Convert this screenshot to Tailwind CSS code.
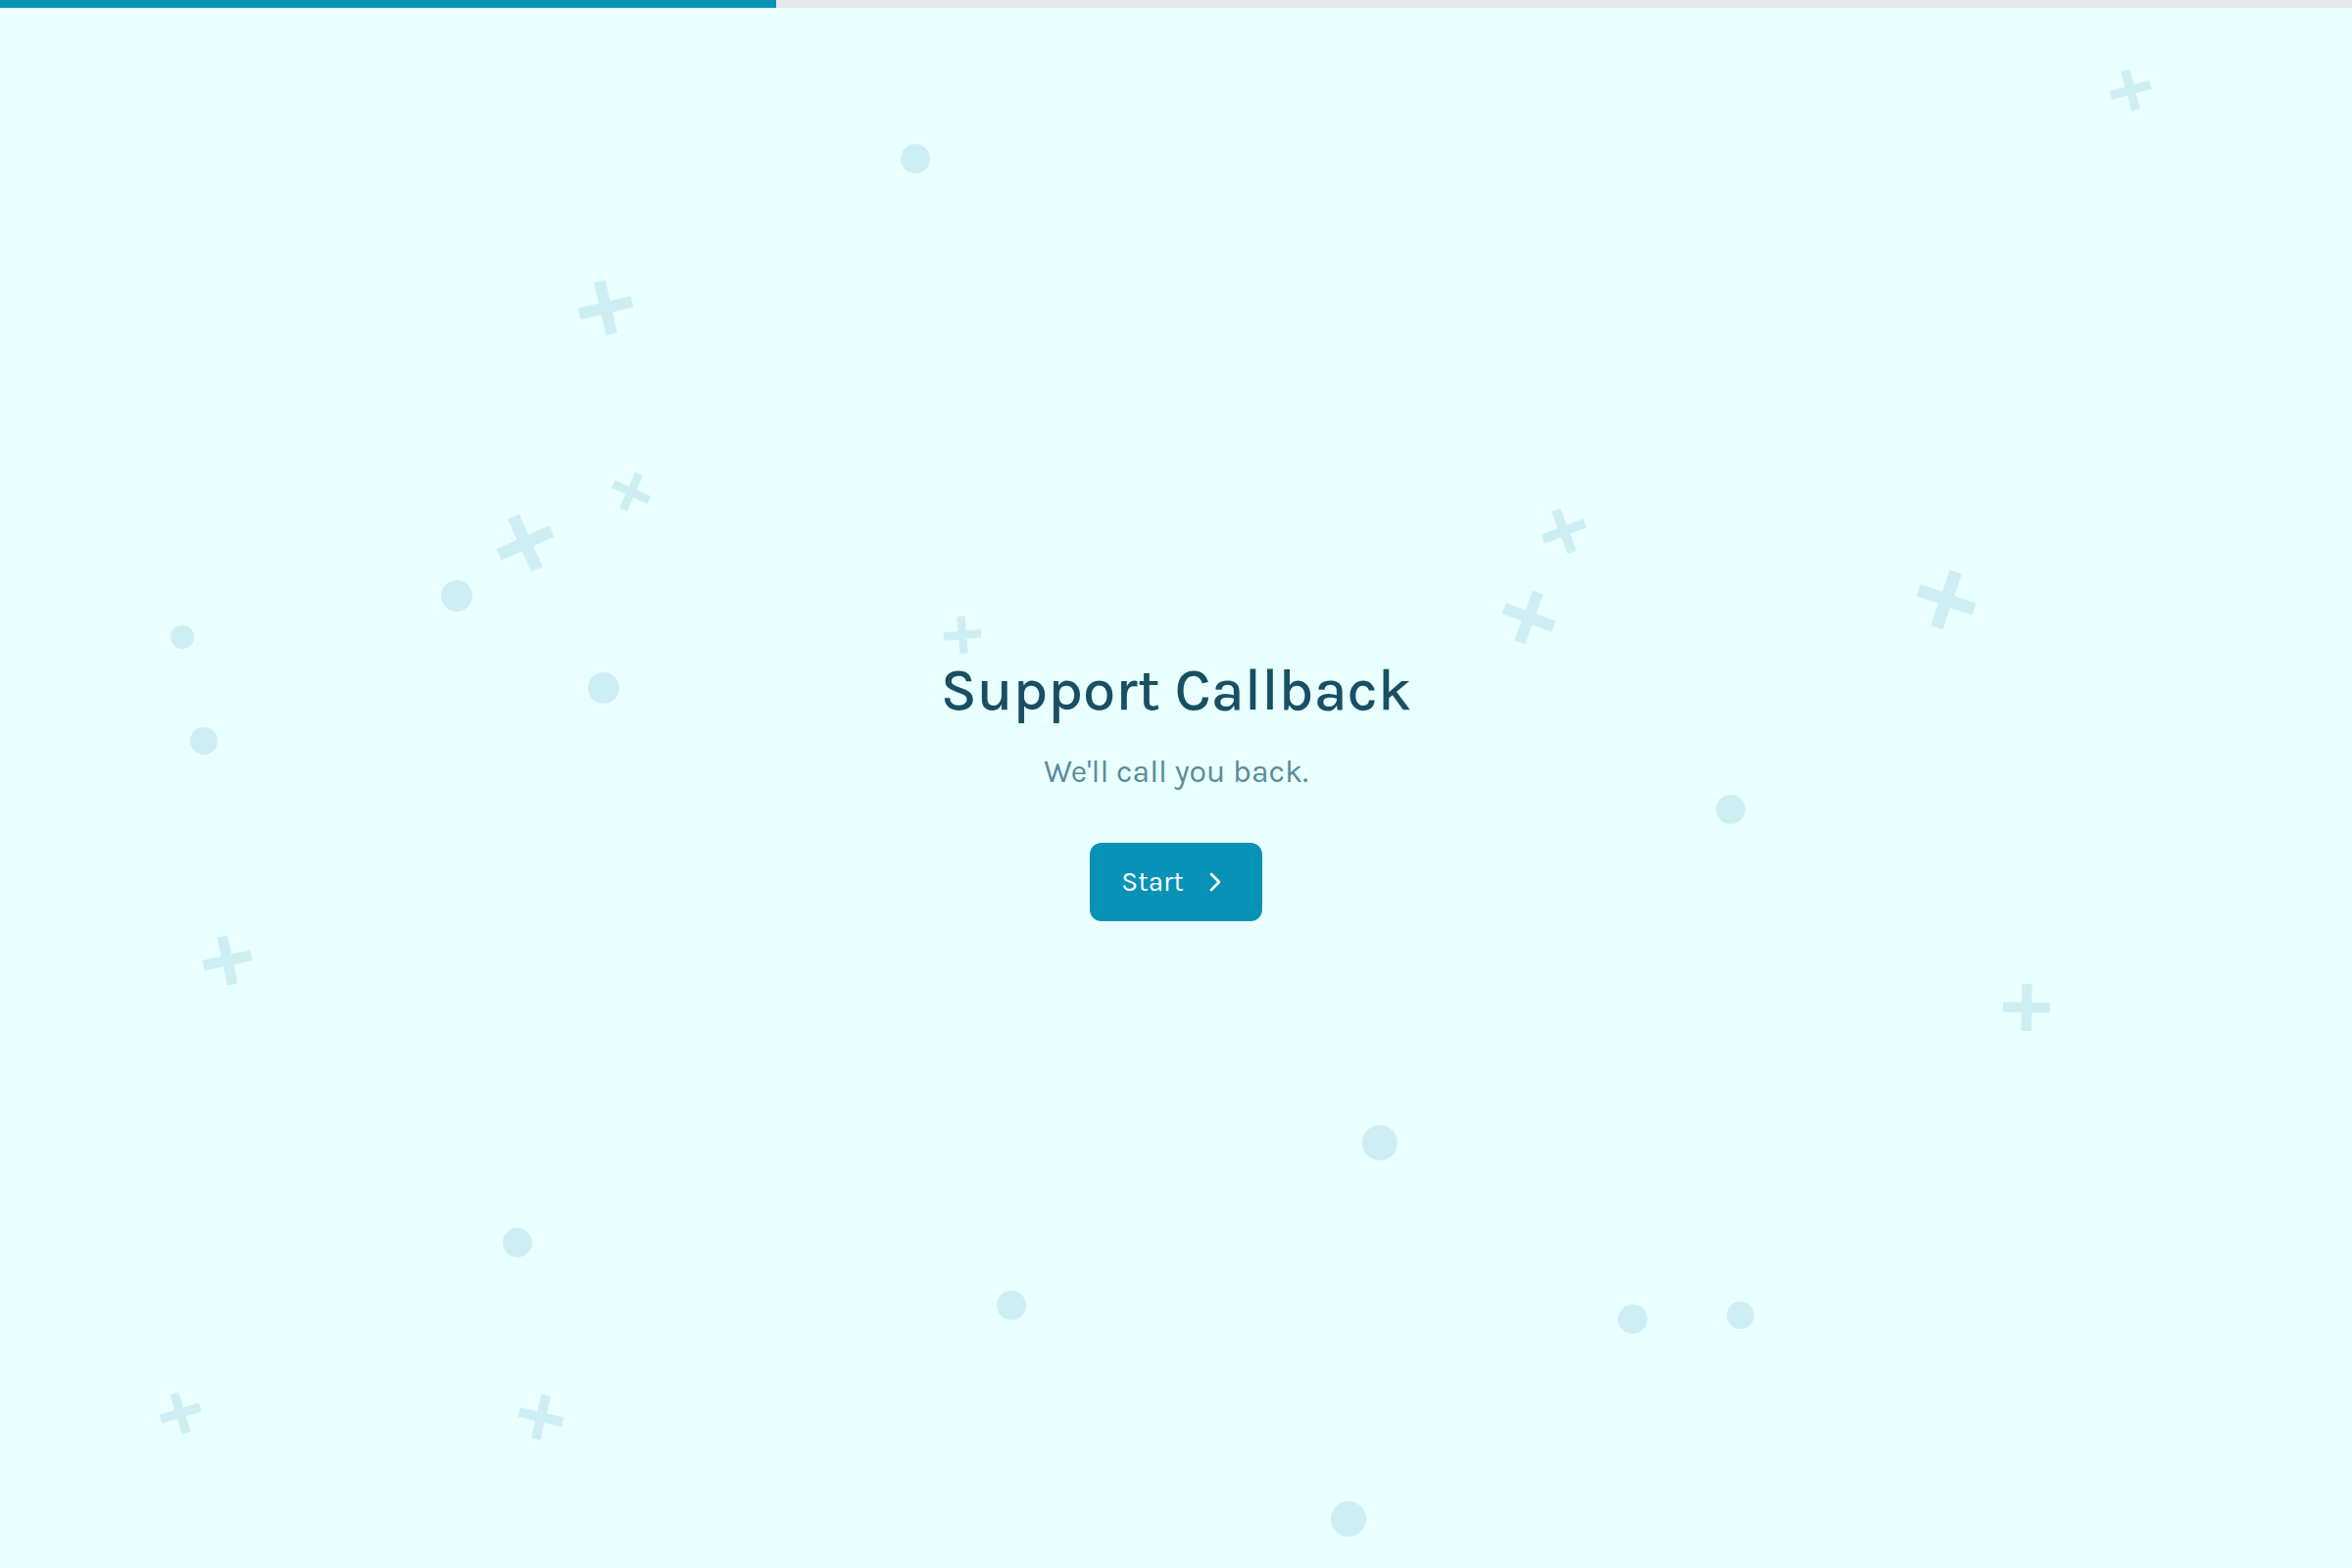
<!DOCTYPE html>
<html lang="en">

<head>
  <meta charset="UTF-8">
  <meta name="viewport" content="width=device-width, initial-scale=1.0">
  <title>Support Callback</title>
  <script src="https://cdn.jsdelivr.net/npm/@tailwindcss/browser@4"></script>
</head>

<body class="relative min-h-screen flex flex-col overflow-hidden bg-[#eaffff] font-['Karla','Roboto',sans-serif]">
  <!-- background shapes -->
  <svg class="absolute inset-0 w-full h-full text-[#cdeff3]" viewBox="0 0 2400 1600" preserveAspectRatio="xMidYMid slice" aria-hidden="true">
    <defs>
      <path id="plus" d="M-.5 0H.5M0 -.5V.5" fill="none" stroke="currentColor" stroke-width=".215" />
    </defs>
    <g fill="currentColor">
      <circle cx="934" cy="162" r="15" />
      <circle cx="466" cy="608" r="16" />
      <circle cx="186" cy="650" r="12" />
      <circle cx="208" cy="756" r="14" />
      <circle cx="616" cy="702" r="16" />
      <circle cx="1766" cy="826" r="15" />
      <circle cx="1408" cy="1166" r="18" />
      <circle cx="1666" cy="1346" r="15" />
      <circle cx="1776" cy="1342" r="14" />
      <circle cx="1376" cy="1550" r="18" />
      <circle cx="528" cy="1268" r="15" />
      <circle cx="1032" cy="1332" r="15" />
    </g>
    <use href="#plus" transform="translate(982 648) rotate(-5) scale(38)" />
    <use href="#plus" transform="translate(618 314) rotate(-13) scale(55)" />
    <use href="#plus" transform="translate(644 502) rotate(24) scale(40)" />
    <use href="#plus" transform="translate(536 554) rotate(-24) scale(59)" />
    <use href="#plus" transform="translate(1596 542) rotate(-21) scale(46)" />
    <use href="#plus" transform="translate(1560 630) rotate(20) scale(54)" />
    <use href="#plus" transform="translate(1986 612) rotate(19) scale(60)" />
    <use href="#plus" transform="translate(232 980) rotate(-12) scale(50)" />
    <use href="#plus" transform="translate(2174 92) rotate(-15) scale(42)" />
    <use href="#plus" transform="translate(184 1442) rotate(-17) scale(42)" />
    <use href="#plus" transform="translate(552 1446) rotate(13) scale(46)" />
    <use href="#plus" transform="translate(2068 1028) rotate(1) scale(48)" />
  </svg>

  <!-- progress -->
  <div class="absolute inset-x-0 top-0 h-2 bg-[#e5e5ea]" role="progressbar" aria-label="Progress" aria-valuenow="33" aria-valuemin="0" aria-valuemax="100">
    <div class="h-full bg-[#0892b5]" style="width: 33%"></div>
  </div>

  <main class="relative flex-1 flex flex-col items-center justify-center text-center">
    <h1 class="text-[60px] leading-[88px] font-medium text-[#184f62]">Support Callback</h1>
    <p class="mt-4 text-[32px] leading-[48px] text-[#598c9b]">We'll call you back.</p>
    <button type="button" class="mt-12 h-20 px-8 flex items-center gap-4 rounded-xl bg-[#0892b5] text-[28px] text-white">
      Start
      <svg class="size-8" viewBox="0 0 24 24" fill="none" stroke="currentColor" stroke-width="2" stroke-linecap="round" stroke-linejoin="round" aria-hidden="true">
        <path d="m9 18 6-6-6-6" />
      </svg>
    </button>
  </main>
</body>

</html>
